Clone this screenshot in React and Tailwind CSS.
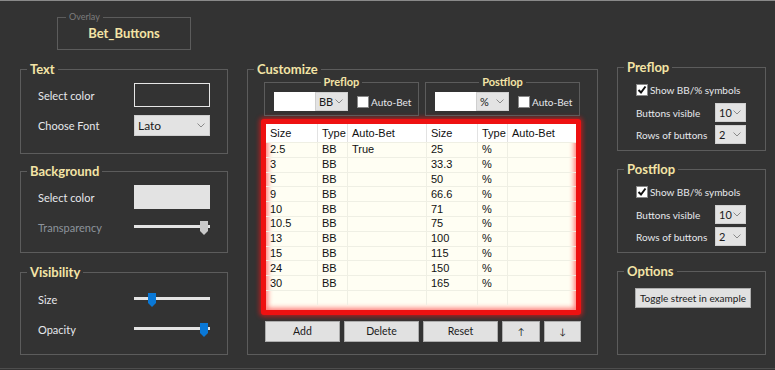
import React from "react";

const cream = "text-[#f3e4a6]";

function Group({ title, className = "", children, titleSize = "text-[13px]" }) {
  return (
    <div className={`relative border border-[#5c5c5c] ${className}`}>
      <div className={`absolute left-[6px] top-[-9px] h-[16px] px-[3px] bg-[#333333] font-bold leading-[16px] whitespace-nowrap ${titleSize} ${cream}`}>
        {title}
      </div>
      {children}
    </div>
  );
}

function Chevron() {
  return (
    <svg width="8" height="5" viewBox="0 0 8 5" className="shrink-0">
      <polyline points="0.5,0.5 4,4 7.5,0.5" fill="none" stroke="#8a8a8a" strokeWidth="1" />
    </svg>
  );
}

function Select({ value, w, h = "h-[19px]", size = "text-[12px]" }) {
  return (
    <div className={`${w} ${h} bg-[#e3e3e3] border border-[#cfcfcf] flex items-center justify-between pl-[3px] pr-[4px] ${size} text-[#1a1a1a] leading-none whitespace-nowrap`}>
      <span>{value}</span>
      <Chevron />
    </div>
  );
}

function Slider({ pos, color }) {
  return (
    <div className="relative w-[76px] h-[20px]">
      <div className="absolute left-0 right-0 top-[8px] h-[3px] bg-[#e4e4e4]" />
      <svg width="8" height="14" viewBox="0 0 8 14" className="absolute top-[4px]" style={{ left: pos }}>
        <polygon points="0,0 8,0 8,10 4,14 0,10" fill={color} />
      </svg>
    </div>
  );
}

function Checkbox({ checked }) {
  return (
    <div className="w-[12px] h-[12px] bg-white border border-[#888] flex items-center justify-center shrink-0">
      {checked && (
        <svg width="10" height="10" viewBox="0 0 10 10">
          <polyline points="1.5,5 4,7.5 8.5,1.5" fill="none" stroke="#111" strokeWidth="2" />
        </svg>
      )}
    </div>
  );
}

function Label({ children, className = "", size = "text-[11px]" }) {
  return <span className={`${size} text-[#e6e8ec] leading-none whitespace-nowrap ${className}`}>{children}</span>;
}

function SubGroup({ title, unit }) {
  return (
    <div className="relative border border-[#5c5c5c] w-[155px] h-[34px] pl-[9px] pt-[9px]">
      <div className="absolute left-0 right-0 top-[-8px] flex justify-center">
        <span className={`bg-[#333333] px-[3px] text-[11px] font-bold leading-[14px] ${cream}`}>{title}</span>
      </div>
      <div className="flex items-center h-[19px]">
        <div className="w-[41px] h-[19px] bg-white" />
        <Select value={unit} w="w-[33px]" size="text-[11px]" />
        <div className="ml-[9px]"><Checkbox /></div>
        <Label className="ml-[2px]" size="text-[10px]">Auto-Bet</Label>
      </div>
    </div>
  );
}

const rows = [
  ["2.5", "BB", "True", "25", "%", ""],
  ["3", "BB", "", "33.3", "%", ""],
  ["5", "BB", "", "50", "%", ""],
  ["9", "BB", "", "66.6", "%", ""],
  ["10", "BB", "", "71", "%", ""],
  ["10.5", "BB", "", "75", "%", ""],
  ["13", "BB", "", "100", "%", ""],
  ["15", "BB", "", "115", "%", ""],
  ["24", "BB", "", "150", "%", ""],
  ["30", "BB", "", "165", "%", ""],
  ["", "", "", "", "", ""],
];
const colW = ["w-[52px]", "w-[30px]", "w-[79px]", "w-[51px]", "w-[30px]", "w-[68px]"];
const header = ["Size", "Type", "Auto-Bet", "Size", "Type", "Auto-Bet"];

function Table() {
  return (
    <div className="w-[320px] h-[196px] border-[5px] border-[#ee1111] rounded-[3px] shadow-[0_0_4px_2px_rgba(255,20,20,0.55)] bg-[#fffef3]">
      <div className="w-full h-full shadow-[inset_0_0_5px_2px_rgba(255,40,40,0.6)] font-['Liberation_Sans'] text-[11px] text-[#111] leading-none overflow-hidden">
        <div className="flex h-[18px] bg-white">
          {header.map((h, i) => (
            <div key={i} className={`${colW[i]} shrink-0 flex items-center pl-[4px] ${i < 5 ? "border-r border-[#e2e2e2]" : ""}`}>{h}</div>
          ))}
        </div>
        {rows.map((r, ri) => (
          <div key={ri} className="flex h-[14.8px] border-t border-[#efefe4]">
            {r.map((c, i) => (
              <div key={i} className={`${colW[i]} shrink-0 flex items-center pl-[4px] ${i < 5 ? "border-r border-[#efefe4]" : ""}`}>{c}</div>
            ))}
          </div>
        ))}
      </div>
    </div>
  );
}

function Btn({ children, w, size = "text-[10.5px]" }) {
  return (
    <div className={`${w} h-[21px] bg-[#e1e1e1] border border-[#adadad] flex items-center justify-center ${size} text-[#1a1a1a] leading-none`}>
      {children}
    </div>
  );
}

function StreetGroup({ title, className = "" }) {
  return (
    <Group title={title} className={`h-[84px] pt-[15px] pl-[18px] ${className}`}>
      <div className="flex items-center h-[14px]">
        <Checkbox checked />
        <Label className="ml-[2px]" size="text-[10px]">Show BB/% symbols</Label>
      </div>
      <div className="flex items-center mt-[6px]">
        <Label className="w-[79px]" size="text-[10px]">Buttons visible</Label>
        <Select value="10" w="w-[31px]" size="text-[11px]" />
      </div>
      <div className="flex items-center mt-[3px]">
        <Label className="w-[79px]" size="text-[10px]">Rows of buttons</Label>
        <Select value="2" w="w-[31px]" size="text-[11px]" />
      </div>
    </Group>
  );
}

export default function App() {
  return (
    <div className="w-[775px] h-[370px] bg-[#333333] border-t border-[#8a8a8a] overflow-hidden flex flex-col font-['Lato',sans-serif]">
      <div className="pl-[57px] pt-[16px]">
        <div className="relative w-[134px] h-[33px] border border-[#5c5c5c] flex items-center justify-center">
          <div className="absolute left-[8px] top-[-7px] px-[3px] bg-[#333333] text-[9px] leading-[12px] text-[#7c7c7c]">Overlay</div>
          <span className={`text-[13px] font-bold ${cream}`}>Bet_Buttons</span>
        </div>
      </div>

      <div className="flex items-start pl-[20px] mt-[17px]">
        {/* Left column */}
        <div className="w-[208px] mt-[2px] flex flex-col">
          <Group title="Text" className="h-[85px] pt-[13px] pl-[17px]">
            <div className="flex items-center h-[24px]">
              <Label className="w-[96px]">Select color</Label>
              <div className="w-[76px] h-[24px] border border-[#e6e6e6]" />
            </div>
            <div className="flex items-center h-[21px] mt-[8px]">
              <Label className="w-[96px]">Choose Font</Label>
              <Select value="Lato" w="w-[76px]" h="h-[21px]" />
            </div>
          </Group>
          <Group title="Background" className="h-[82px] mt-[17px] pt-[13px] pl-[17px]">
            <div className="flex items-center h-[24px]">
              <Label className="w-[96px]">Select color</Label>
              <div className="w-[76px] h-[24px] bg-[#e3e3e3]" />
            </div>
            <div className="flex items-center h-[20px] mt-[8px]">
              <span className="w-[96px] text-[11px] leading-none text-[#8d939c]">Transparency</span>
              <Slider pos={66} color="#c9c9c9" />
            </div>
          </Group>
          <Group title="Visibility" className="h-[83px] mt-[19px] pt-[16px] pl-[17px]">
            <div className="flex items-center h-[20px]">
              <Label className="w-[96px]">Size</Label>
              <Slider pos={14} color="#0a78d6" />
            </div>
            <div className="flex items-center h-[20px] mt-[10px]">
              <Label className="w-[96px]">Opacity</Label>
              <Slider pos={66} color="#0a78d6" />
            </div>
          </Group>
        </div>

        {/* Middle column */}
        <Group title="Customize" className="w-[351px] h-[286px] ml-[19px] mt-[2px] pt-[12px] pl-[16px]">
          <div className="flex gap-[6px]">
            <SubGroup title="Preflop" unit="BB" />
            <SubGroup title="Postflop" unit="%" />
          </div>
          <div className="mt-[3px] ml-[-3px]">
            <Table />
          </div>
          <div className="flex gap-[4px] mt-[6px] ml-[1px]">
            <Btn w="w-[75px]">Add</Btn>
            <Btn w="w-[75px]">Delete</Btn>
            <Btn w="w-[75px]">Reset</Btn>
            <Btn w="w-[38px]" size="text-[9px]">↑</Btn>
            <Btn w="w-[37px]" size="text-[9px]">↓</Btn>
          </div>
        </Group>

        {/* Right column */}
        <div className="w-[149px] ml-[19px] flex flex-col">
          <StreetGroup title="Preflop" />
          <StreetGroup title="Postflop" className="mt-[18px]" />
          <Group title="Options" className="h-[84px] mt-[18px] pt-[16px] pl-[17px]">
            <div className="w-[116px] h-[20px] bg-[#e1e1e1] border border-[#adadad] flex items-center justify-center text-[10px] text-[#1a1a1a] leading-none whitespace-nowrap">
              Toggle street in example
            </div>
          </Group>
        </div>
      </div>

      <div className="mt-auto mb-[1px] h-0 border-t border-[#4d4d4d]" />
    </div>
  );
}
